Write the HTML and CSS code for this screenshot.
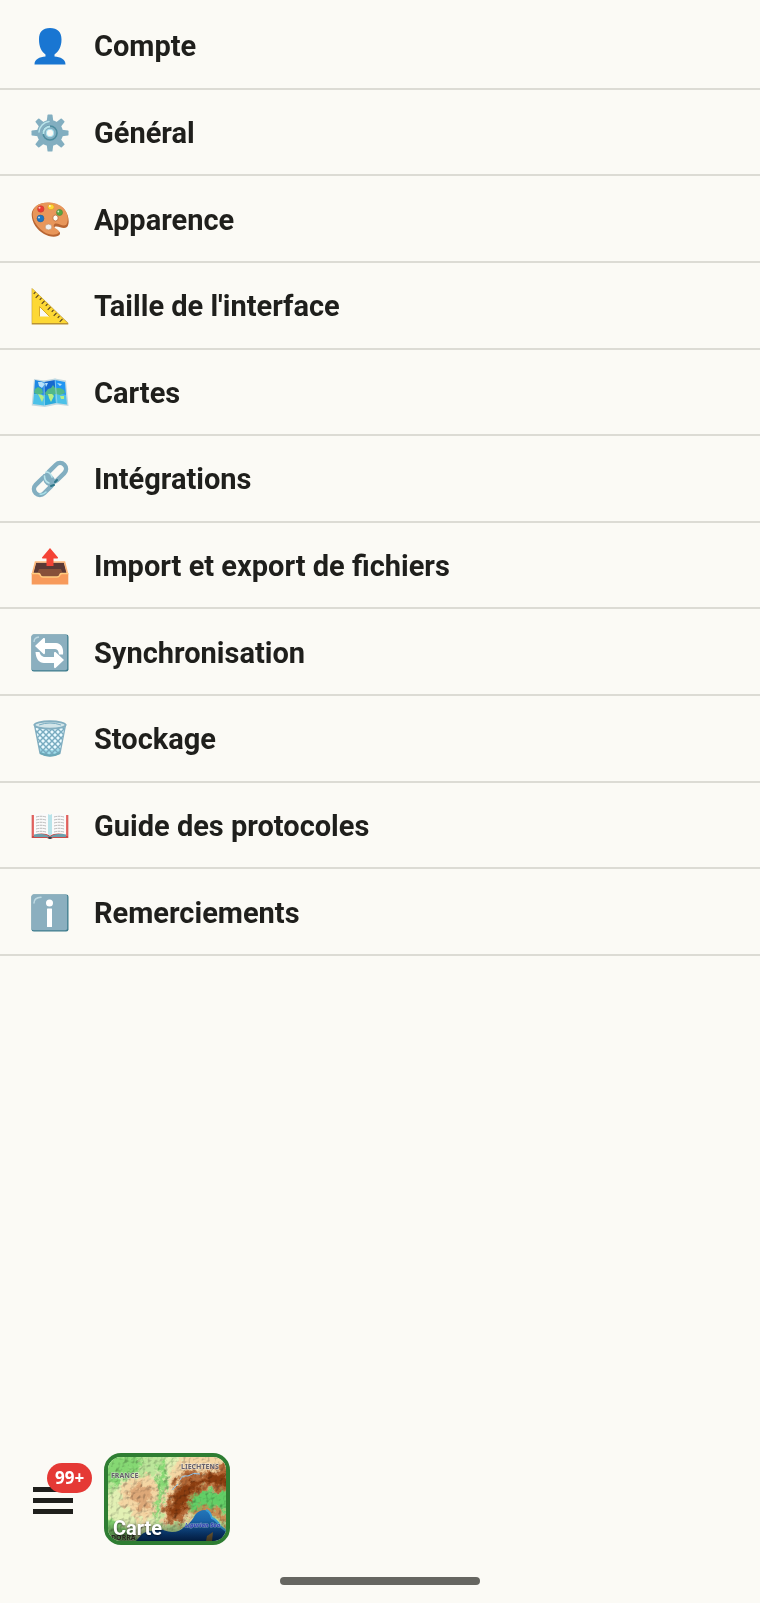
FILE: index.html
```html
<!DOCTYPE html>
<html lang="fr">
<head>
<meta charset="utf-8">
<meta name="viewport" content="width=device-width, initial-scale=1">
<title>Réglages</title>
<link rel="stylesheet" href="styles.css">
</head>
<body>
<main class="settings">
  <ul class="settings-list">
    <li><button class="row" type="button">
      <svg class="icon" viewBox="0 0 38 38" aria-hidden="true"><path fill="#1976d2" d="M19 1C11.500 1 8 5 8 12.500C8 20 10.500 24.500 14.500 27.500V29.500C8.500 30 3.500 32 3.500 37.500H34.500C34.500 32 29.500 30 23.500 29.500V27.500C27.500 24.500 30.500 20 30.500 12.500C30.500 5 26.500 1 19 1Z"/></svg>
      <span>Compte</span></button></li>
    <li><button class="row" type="button">
      <svg class="icon" viewBox="0 0 38 38" aria-hidden="true">
        <g fill="#82aec0"><path id="tooth" d="M15.500 9L16.500 1Q16.600.5 17.200.5H20.800Q21.400.5 21.500 1L22.500 9V29L21.500 37Q21.400 37.500 20.800 37.500H17.200Q16.600 37.500 16.500 37L15.500 29Z"/><use href="#tooth" transform="rotate(45 19 19)"/><use href="#tooth" transform="rotate(90 19 19)"/><use href="#tooth" transform="rotate(135 19 19)"/><circle cx="19" cy="19" r="13"/></g>
        <path d="M8 18A11.500 11.500 0 0 1 18 7.500" fill="none" stroke="#b9e4ea" stroke-width="1.500" stroke-linecap="round"/>
        <circle cx="19" cy="19" r="7" fill="#82aec0" stroke="#4c8c9e" stroke-width="1.500"/>
        <path d="M12.500 20A6.500 6.500 0 0 1 19 12.500" fill="none" stroke="#b9e4ea" stroke-width="2"/>
        <circle cx="19" cy="19" r="3.800" fill="#fafaf5" stroke="#a8e3f0"/>
      </svg><span>Général</span></button></li>
    <li><button class="row" type="button">
      <svg class="icon" viewBox="0 0 38 38" aria-hidden="true">
        <path fill="#b86532" d="M9 3C16 .5 27 2 33 8C38 14 39 22 36 26C32 29 27 24 23.500 26C22 29 30 29 29 33C27 37 18 36 13 33C6 29 1 22 .7 14C.6 9 4 5 9 3Z"/>
        <path fill="#e8965a" d="M10 2.500C17 .2 27 1.500 32.500 7C37 12 38 19 35.500 23.500C32 27 27 21 23.500 23C20 27 29 28 28 31.500C25 35 18 34 13 31C7 27 2 20 1.700 14C1.500 8 5 4 10 2.500Z"/>
        <ellipse cx="24.500" cy="17" rx="2.700" ry="3" fill="#fffdf5" stroke="#b86532" stroke-width=".8"/>
        <g stroke-width=".7"><circle cx="9.800" cy="8" r="3.200" fill="#ed3931" stroke="#c94335"/><ellipse cx="20" cy="6" rx="3.200" ry="2.700" fill="#fdd835" stroke="#e29b25"/><circle cx="28.500" cy="11.500" r="3" fill="#59a641" stroke="#55883b"/><circle cx="9.500" cy="17.500" r="3.400" fill="#1976c5" stroke="#2b619b"/><ellipse cx="17.500" cy="26" rx="3.400" ry="2.900" fill="#efefef" stroke="#c98d60"/></g>
        <g fill="#fff" opacity=".75"><circle cx="8.500" cy="6.800" r="1"/><circle cx="18.800" cy="5" r="1"/><circle cx="27.300" cy="10.500" r=".9"/><circle cx="8" cy="16.500" r="1"/></g>
      </svg><span>Apparence</span></button></li>
    <li><button class="row" type="button">
      <svg class="icon" viewBox="0 0 38 38" aria-hidden="true">
        <path fill="#b99232" d="M.7 1V37.500H37.300V36L2 2Z"/><path fill="#fdd835" d="M1.200 1.500L36.500 36H1.200Z"/>
        <path fill="#fafaf5" d="M8.500 19.500L18.500 29.500H8.500Z"/><path d="M8.500 29.500V19.500L18.500 29.500" fill="none" stroke="#d8aa29"/>
        <path stroke="#594524" stroke-width="1.100" d="M4.500 5L2.700 6.800M7.500 8L4.700 10.800M10.500 11L8.700 12.800M13.500 14L10.700 16.800M16.500 17L14.700 18.800M19.500 20L16.700 22.800M22.500 23L20.700 24.800M25.500 26L22.700 28.800M28.500 29L26.700 30.800M31.500 32L28.700 34.800"/>
      </svg><span>Taille de l'interface</span></button></li>
    <li><button class="row" type="button">
      <svg class="icon" viewBox="0 0 38 38" aria-hidden="true">
        <path fill="#c4d8df" d="M3 5L13 6.500L24 4.500L35 6.500L37.500 32L26 30.500L14 33L.7 31.500Z"/>
        <path fill="#1e88e5" d="M4 6L13 8V21L3 20Z"/><path fill="#1669cf" d="M13 8L24 6V20L13 21Z"/><path fill="#2196f3" d="M24 6L34 8L35 21L24 20Z"/>
        <path fill="#4cc1e8" d="M3 20L13 21V31.500L2 30ZM24 20L35 21L36 30.500L25 29Z"/><path fill="#2aa9dc" d="M13 21L24 20L25 29L13 31.500Z"/>
        <path fill="#50b88a" d="M4 15L7 13L11 15L12 19L8 21L3 19ZM14 19L17 15L20 14L22 11L24 14L29 14L33 16L34 19L29 21L24 20L20 22L15 21Z"/>
        <path fill="#b5ee86" d="M7 20L11 21L13 23L11 28L9 24ZM17 20L21 20L23 22L20 28L18 24ZM29 22L33 22L33 25H30Z"/>
        <path fill="#b8e2fb" d="M7 8L11 8L14 10L11 14L8 12ZM14 9L17 9L15 13ZM26 9L31 10L29 12Z"/>
        <path d="M13 6.500L13.500 32.500M24 4.500L26 30.500" stroke="#a5dcf0" stroke-width=".7"/>
      </svg><span>Cartes</span></button></li>
    <li><button class="row" type="button">
      <svg class="icon" viewBox="0 0 38 38" aria-hidden="true">
        <g fill="none" stroke-linecap="round"><rect x="-11" y="-5.900" width="22" height="11.800" rx="5.900" transform="translate(25.500 12.500) rotate(-45)" stroke="#82aec0" stroke-width="4.500"/>
        <rect x="-11" y="-5.900" width="22" height="11.800" rx="5.900" transform="translate(12.500 25.500) rotate(-45)" stroke="#82aec0" stroke-width="4.500"/>
        <path d="M14 16C13.500 20 16 23 19 24" stroke="#82aec0" stroke-width="4.500"/><path d="M13.500 16C13.500 20 15 22 18 23M15 12C18 12 20 14 21 17" stroke="#b9e4ea" stroke-width="1.600"/>
        <path d="M20 26L23 25M24 22L26 20" stroke="#2f7889" stroke-width="2"/><path d="M9 34Q12 35 15 32" stroke="#a9e2ea" stroke-width="1.500"/></g>
      </svg><span>Intégrations</span></button></li>
    <li><button class="row" type="button">
      <svg class="icon" viewBox="0 0 38 38" aria-hidden="true">
        <path fill="#5b3835" d="M5 15.500H33L36.500 28H1.500Z"/><path fill="#875039" d="M8 22H30L33 30H5Z"/>
        <path fill="none" stroke="#ffb778" stroke-width="1.600" d="M1.300 27.500L4.500 15H33.500L36.700 27.500"/>
        <path fill="#f79a5b" d="M.7 26H7.500Q9 26 10 28.500Q10.500 30 12 30H26Q27.500 30 28 28.500Q29 26 30.500 26H37.300V37.500H.7Z"/><path fill="none" stroke="#ffcc80" stroke-width="1.300" d="M1 26.500H7Q9 26.500 9.500 28.500Q10 30 12 30H26Q28 30 28.500 28.500Q29 26.500 31 26.500H37"/>
        <path fill="#f44336" d="M19 1L27 10.500Q27.500 11.500 26 11.500H22.500V19H15.500V11.500H12Q10.500 11.500 11 10.500Z"/>
      </svg><span>Import et export de fichiers</span></button></li>
    <li><button class="row" type="button">
      <svg class="icon" viewBox="0 0 38 38" aria-hidden="true">
        <rect x=".5" y=".5" width="37" height="37" rx="2.300" fill="#3f7d8e"/><rect x=".5" y=".5" width="35.700" height="35.700" rx="2" fill="#8bafbf"/><path d="M3 8Q3 3.500 8 3" fill="none" stroke="#bed9e2" stroke-width="1.300"/>
        <path fill="#fff" d="M4 12L12.500 4Q14 3.500 14 5V9H25C30 9 33 14 32 20.500H28C27.500 16 26 15 23 15H14V19Q14 20.500 12.500 20ZM33 26L24.500 18Q23 17.500 23 19V23H14C11 23 9 20.500 8.500 18H4.500C5 25 8 29 13 29H23V33Q23 34.500 24.500 34Z"/>
      </svg><span>Synchronisation</span></button></li>
    <li><button class="row" type="button">
      <svg class="icon" viewBox="0 0 38 38" aria-hidden="true">
        <defs><pattern id="mesh" width="6" height="6" patternUnits="userSpaceOnUse"><path d="M0 0L6 6M6 0L0 6" stroke="#78abc0" stroke-width="1.500"/></pattern></defs>
        <path d="M3.500 5L9 33Q19 39 29 33L34.500 5Q19 12 3.500 5Z" fill="#eafaff"/><path d="M8 28Q19 32 30 28L29 33Q19 39 9 33Z" fill="#9fdcea"/><path d="M3.500 5L9 33Q19 39 29 33L34.500 5Q19 12 3.500 5Z" fill="url(#mesh)" stroke="#82aec0" stroke-width="1.300"/>
        <ellipse cx="19" cy="5" rx="15.500" ry="3.700" fill="#d2e5e9" stroke="#82aec0" stroke-width="2"/><path d="M8 5Q19 1 30 5" fill="none" stroke="#78abc0"/><path d="M9 33Q19 38 29 33" fill="none" stroke="#6ba7b7" stroke-width="2"/>
      </svg><span>Stockage</span></button></li>
    <li><button class="row" type="button">
      <svg class="icon" viewBox="0 0 38 38" aria-hidden="true">
        <path fill="#c94a48" d="M.7 8H37.300V31H22Q19 33 16 31H.7Z"/><path fill="#e66c68" d="M1.300 8H3V29H1.300ZM35 8H36.700V29H35Z"/><path fill="#6b9fac" d="M3 27Q14 26 19 30Q24 26 35 27V30H22Q19 32 16 30H3Z"/>
        <path fill="#fafafa" d="M3 7.500Q14 5 19 8V28.500Q13 25 3 27.500ZM35 7.500Q24 5 19 8V28.500Q25 25 35 27.500Z"/><path fill="#b9e4ea" d="M17 7L19 8L21 7V27L19 29L17 27Z"/>
        <path fill="none" stroke="#aaa" stroke-width=".8" stroke-dasharray="3 .6" d="M5 10Q10 8.500 15 10M5 13Q10 11.500 15 13M5 16Q10 14.500 15 16M5 19Q10 17.500 15 19M5 22Q10 20.500 15 22M5 25Q10 23.500 15 25M23 10Q28 8.500 33 10M23 13Q28 11.500 33 13M23 16Q28 14.500 33 16M23 19Q28 17.500 33 19M23 22Q28 20.500 33 22M23 25Q28 23.500 33 25"/><path fill="#36474f" d="M17 30H21L20 32H18Z"/>
      </svg><span>Guide des protocoles</span></button></li>
    <li><button class="row" type="button">
      <svg class="icon" viewBox="0 0 38 38" aria-hidden="true">
        <rect x=".5" y=".5" width="37" height="37" rx="2.300" fill="#3f7d8e"/><rect x=".5" y=".5" width="35.700" height="35.700" rx="2" fill="#8bafbf"/><path d="M3 9Q3 3.500 10 3.200" fill="none" stroke="#bed9e2" stroke-width="1.500" stroke-linecap="round"/><circle cx="18.500" cy="9" r="3.500" fill="#fff"/><rect x="16" y="14.500" width="5" height="18.500" rx=".5" fill="#fff"/>
      </svg><span>Remerciements</span></button></li>
  </ul>
</main>
<footer class="dock">
  <nav class="dock-nav">
    <button class="menu" type="button" aria-label="Menu, plus de 99 notifications"><span class="bar"></span><span class="bar"></span><span class="bar"></span><span class="badge">99+</span></button>
    <button class="map-card" type="button">
      <svg class="map" viewBox="0 0 118 84" preserveAspectRatio="xMidYMid slice" aria-hidden="true">
        <defs>
          <filter id="edge" x="-20%" y="-20%" width="140%" height="140%" color-interpolation-filters="sRGB"><feTurbulence type="fractalNoise" baseFrequency=".16" numOctaves="5" seed="4" result="n"/><feGaussianBlur in="SourceGraphic" stdDeviation="1.500" result="s"/><feDisplacementMap in="s" in2="n" scale="16" xChannelSelector="R" yChannelSelector="G"/></filter>
          <filter id="relief" x="0" y="0" width="100%" height="100%" color-interpolation-filters="sRGB"><feTurbulence type="fractalNoise" baseFrequency=".22" numOctaves="3" seed="9"/><feDiffuseLighting surfaceScale="2" diffuseConstant="1.300" lighting-color="#fff"><feDistantLight azimuth="225" elevation="50"/></feDiffuseLighting></filter>
          <linearGradient id="shade" x2="0" y2="1"><stop offset=".75" stop-opacity="0"/><stop offset="1" stop-opacity=".55"/></linearGradient>
          <linearGradient id="sea" x2="0" y2="1"><stop stop-color="#2476b8"/><stop offset="1" stop-color="#063f8c"/></linearGradient>
        </defs>
        <rect width="118" height="84" fill="#bce69a"/>
        <g filter="url(#edge)">
          <path fill="#e2f0b4" d="M-5 40L20 22L45 20L65 -5H80L60 30L50 65L30 80H-5Z"/><path fill="#85d873" d="M-5 2L25 -4L35 8L16 22L4 30L-5 28ZM52 5L60 2L56 35L50 62L45 58ZM-5 60L12 66L28 76L20 90H-5Z"/>
          <path fill="#f4d6a4" d="M14 30L28 18L46 20L52 35L44 58L34 70L24 55L12 46ZM64 12L77 -6H126V44L88 38L80 66L54 68L54 46Z"/><path fill="#dda878" d="M18 38L30 26L44 32L42 48L34 56L26 44Z"/>
          <path fill="#b56a38" d="M68 24L78 14L92 15L106 12L126 6V36L98 31L84 40L80 54L76 66L60 66L56 50L62 38Z"/><path fill="#8a3c0f" d="M74 29L92 22L104 16L124 20V30L98 26L84 34L77 48L70 60L62 58L64 42Z"/>
          <path fill="#62cf66" d="M81 48L86 37L96 33L126 35V58L108 50L94 51L82 57Z"/><path fill="#c88b51" d="M84 54L96 48L110 52L124 60V70L105 60L94 55L82 63Z"/>
        </g>
        <rect class="relief" width="118" height="84" filter="url(#relief)"/>
        <path d="M72 23Q74 18 80 19Q85 15 92 17M70 27L64 33" fill="none" stroke="#8ec6ef"/>
        <path fill="url(#sea)" d="M28 84L34 77Q38 74 46 74L51 71Q56 74 64 75Q72 75 76 70Q84 65 87 58Q91 53 97 53Q102 54 104 61Q109 63 112 69L118 74V84Z"/>
        <path d="M98 53Q102 54 104 61Q109 63 112 69L118 74" fill="none" stroke="#3aa0d8" stroke-width="2"/><path fill="#947844" d="M99 79L105 75L104 84H98Z"/>
        <rect width="118" height="84" fill="url(#shade)"/>
        <g class="map-labels"><text x="3" y="21">FRANCE</text><text x="73" y="12">LIECHTENS</text><text class="water" x="77" y="70">Ligurian Sea</text><text class="faded" x="3" y="83">DORRA</text></g>
      </svg>
      <span class="map-title">Carte</span>
    </button>
  </nav>
  <div class="home-bar"></div>
</footer>
</body>
</html>
```

FILE: styles.css
```css
* { box-sizing: border-box; }
body {
  margin: 0;
  min-height: 100vh;
  display: flex;
  flex-direction: column;
  background: #fbfaf5;
  color: #1f1f1c;
  font-family: Roboto, "Noto Sans", sans-serif;
}
button { font: inherit; color: inherit; border: 0; background: none; cursor: pointer; }
.settings { padding-top: 3px; }
.settings-list {
  display: grid;
  grid-auto-rows: 1fr;
  min-height: 953px;
  margin: 0;
  padding: 0;
  list-style: none;
}
.settings-list li { display: flex; border-bottom: 2px solid #dcdbd4; }
.row {
  flex: 1;
  display: flex;
  align-items: center;
  gap: 25px;
  padding: 2px 31px 0;
  font-size: 29px;
  line-height: 36px;
  font-weight: 700;
  text-align: left;
}
.icon { flex: none; width: 38px; height: 38px; }
.dock { margin-top: auto; padding: 0 32px 18px; }
.dock-nav { display: flex; align-items: center; gap: 31px; margin-bottom: 32px; }
.menu {
  position: relative;
  display: flex;
  flex-direction: column;
  gap: 6px;
  width: 41px;
  padding: 2px 0 0 1px;
}
.bar { height: 5px; background: #1f1f1c; }
.badge {
  position: absolute;
  top: -22px;
  left: 15px;
  padding: 0 8px;
  height: 30px;
  border-radius: 15px;
  background: #e53935;
  color: #fff;
  font-family: "Noto Sans", sans-serif;
  font-size: 17px;
  line-height: 30px;
  font-weight: 700;
}
.map-card {
  position: relative;
  width: 126px;
  height: 92px;
  padding: 0;
  overflow: hidden;
  border: 4px solid #2e7d32;
  border-radius: 17px;
}
.map { display: block; width: 100%; height: 100%; }
.relief { opacity: .4; mix-blend-mode: multiply; }
.map-labels {
  font-family: "Noto Sans", sans-serif;
  font-size: 7px;
  font-weight: 700;
  fill: #66616b;
  stroke: #ffffff;
  stroke-opacity: .5;
  stroke-width: 1px;
  paint-order: stroke;
}
.map-labels .water { font-size: 6px; font-style: italic; fill: #3540b5; stroke-opacity: .4; }
.map-labels .faded { fill: #282520; stroke-opacity: .1; }
.map-title {
  position: absolute;
  left: 5px;
  bottom: 1px;
  color: #fff;
  font-size: 20px;
  line-height: 24px;
  font-weight: 700;
  text-shadow: 0 1px 2px #000000aa;
}
.home-bar { width: 200px; height: 8px; margin: 0 auto; border-radius: 4px; background: #666661; }
```
